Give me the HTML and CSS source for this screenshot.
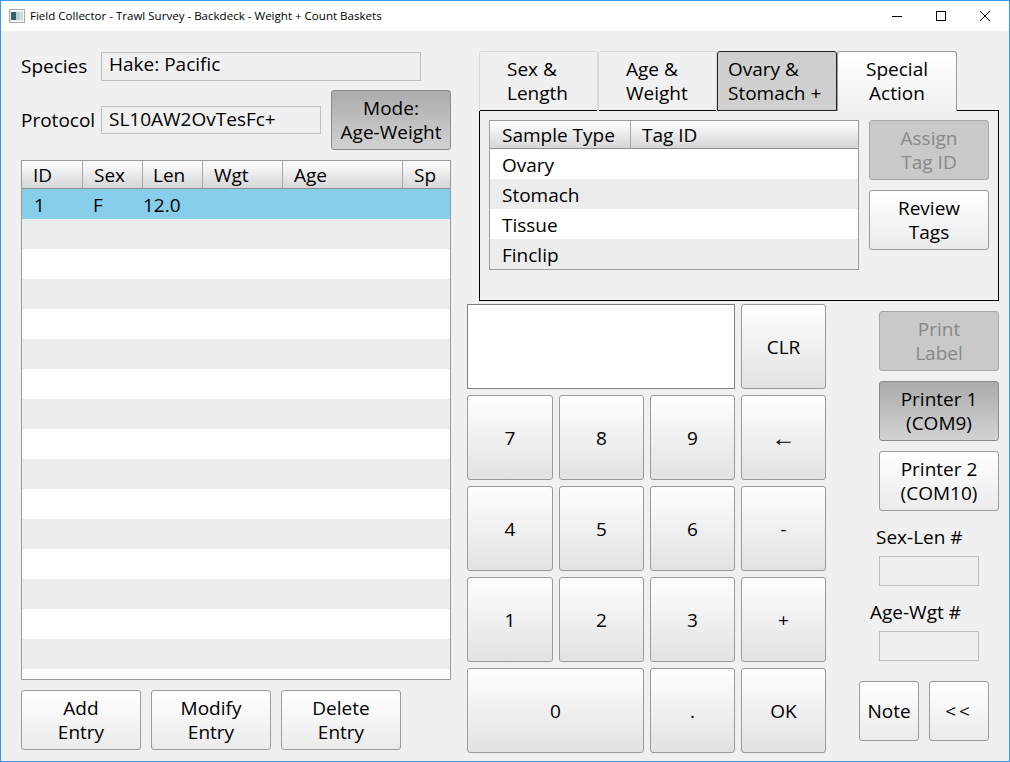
FILE: index.html
```html
<!DOCTYPE html>
<html lang="en">
<head>
<meta charset="utf-8">
<title>Field Collector</title>
<link rel="stylesheet" href="styles.css">
</head>
<body>
<div class="window">
  <header class="titlebar">
    <svg class="appicon" width="16" height="14" viewBox="0 0 16 14"><rect x="0.5" y="0.5" width="15" height="13" fill="#f2f2f2" stroke="#a9a9a9"/><rect x="2" y="3" width="5" height="8" fill="#35606a"/><rect x="7" y="3" width="4" height="8" fill="#b5d3d6"/><rect x="11" y="3" width="3" height="8" fill="#d8d8d8"/></svg>
    <span class="title">Field Collector - Trawl Survey - Backdeck - Weight + Count Baskets</span>
    <div class="winctl">
      <svg width="12" height="12" viewBox="0 0 12 12"><path d="M1 6.5h10" stroke="#000" fill="none"/></svg>
      <svg width="12" height="12" viewBox="0 0 12 12"><rect x="1.5" y="1.5" width="9" height="9" stroke="#000" fill="none"/></svg>
      <svg width="12" height="12" viewBox="0 0 12 12"><path d="M1 1l10 10M11 1L1 11" stroke="#000" fill="none"/></svg>
    </div>
  </header>
  <main class="content">
    <section class="left">
      <div class="row species-row">
        <label class="lbl">Species</label>
        <div class="field species">Hake: Pacific</div>
      </div>
      <div class="row proto-row">
        <label class="lbl">Protocol</label>
        <div class="field protocol">SL10AW2OvTesFc+</div>
        <button class="btn wide active">Mode:<br>Age-Weight</button>
      </div>
      <div class="grid-table entries">
        <div class="thead">
          <div class="th c-id">ID</div><div class="th c-sex">Sex</div><div class="th c-len">Len</div><div class="th c-wgt">Wgt</div><div class="th c-age">Age</div><div class="th c-sp">Sp</div>
        </div>
        <div class="tr sel"><div class="td c-id">1</div><div class="td c-sex">F</div><div class="td c-len num">12.0</div></div>
        <div class="tr alt"></div><div class="tr"></div><div class="tr alt"></div><div class="tr"></div>
        <div class="tr alt"></div><div class="tr"></div><div class="tr alt"></div><div class="tr"></div>
        <div class="tr alt"></div><div class="tr"></div><div class="tr alt"></div><div class="tr"></div>
        <div class="tr alt"></div><div class="tr"></div><div class="tr alt"></div><div class="tr"></div>
        <div class="tr alt"></div><div class="tr"></div>
      </div>
      <div class="row actions">
        <button class="btn wide">Add<br>Entry</button>
        <button class="btn wide">Modify<br>Entry</button>
        <button class="btn wide">Delete<br>Entry</button>
      </div>
    </section>
    <section class="right">
      <div class="tabs">
        <div class="tab plain t1">Sex &amp;<br>Length</div>
        <div class="tab plain t2">Age &amp;<br>Weight</div>
        <div class="tab current t3">Ovary &amp;<br>Stomach +</div>
        <div class="tab bright t4">Special<br>Action</div>
      </div>
      <div class="panel">
        <div class="grid-table samples">
          <div class="thead">
            <div class="th c-type">Sample Type</div><div class="th c-tag">Tag ID</div>
          </div>
          <div class="tr"><div class="td">Ovary</div></div>
          <div class="tr alt"><div class="td">Stomach</div></div>
          <div class="tr"><div class="td">Tissue</div></div>
          <div class="tr alt"><div class="td">Finclip</div></div>
        </div>
        <div class="panel-btns">
          <button class="btn wide disabled">Assign<br>Tag ID</button>
          <button class="btn wide">Review<br>Tags</button>
        </div>
      </div>
      <div class="lower">
        <div class="keypad">
          <div class="display"></div>
          <button class="btn key">CLR</button>
          <button class="btn key">7</button><button class="btn key">8</button><button class="btn key">9</button><button class="btn key arrow">←</button>
          <button class="btn key">4</button><button class="btn key">5</button><button class="btn key">6</button><button class="btn key">-</button>
          <button class="btn key">1</button><button class="btn key">2</button><button class="btn key">3</button><button class="btn key">+</button>
          <button class="btn key zero">0</button><button class="btn key">.</button><button class="btn key">OK</button>
        </div>
        <div class="side">
          <button class="btn wide disabled">Print<br>Label</button>
          <button class="btn wide active">Printer 1<br>(COM9)</button>
          <button class="btn wide">Printer 2<br>(COM10)</button>
          <div class="count-lbl sexlen">Sex-Len #</div>
          <div class="field count"></div>
          <div class="count-lbl agewgt">Age-Wgt #</div>
          <div class="field count"></div>
          <div class="side-end">
            <button class="btn small">Note</button>
            <button class="btn small chev">&lt;&lt;</button>
          </div>
        </div>
      </div>
    </section>
  </main>
</div>
</body>
</html>
```
FILE: styles.css
```css
* { box-sizing: border-box; }
html, body { margin: 0; padding: 0; }
body {
  width: 1010px;
  height: 762px;
  overflow: hidden;
  font-family: "Open Sans", "Noto Sans", sans-serif;
  font-size: 19px;
  line-height: 24px;
  color: #000;
}
.window {
  width: 1010px;
  height: 762px;
  border: 1px solid #3c97ec;
  background: #f0f0f0;
  display: flex;
  flex-direction: column;
}
.titlebar {
  height: 30px;
  flex: none;
  background: #fff;
  display: flex;
  align-items: center;
  padding-left: 8px;
  font-size: 11.55px;
}
.appicon { margin-right: 5px; margin-top: -1px; }
.title { white-space: nowrap; }
.winctl {
  margin-left: auto;
  display: flex;
  gap: 32px;
  padding-right: 18px;
}
.content {
  flex: 1;
  display: flex;
  padding: 20px 0 0 20px;
}
.left { width: 430px; flex: none; }
.right { margin-left: 16px; flex: 1; }
.row { display: flex; }
.lbl { width: 80px; flex: none; }
.species-row { align-items: center; height: 30px; }
.proto-row { align-items: center; height: 60px; margin-top: 9px; }
.field {
  background: #f0f0f0;
  border: 1px solid #bdbdbd;
  padding-left: 7px;
  white-space: nowrap;
}
.species { width: 320px; height: 29px; line-height: 22px; }
.protocol { width: 220px; height: 28px; line-height: 25px; margin-right: 10px; }
.btn {
  font: inherit;
  color: #000;
  padding: 0;
  border: 1px solid #9a9a9a;
  border-radius: 3px;
  background: linear-gradient(#ffffff, #ebebeb);
  text-align: center;
}
.wide { width: 120px; height: 60px; }
.small { width: 60px; height: 60px; }
.chev { letter-spacing: 3px; }
.active {
  background: linear-gradient(#ababab, #d2d2d2);
  border-color: #8c8c8c;
}
.disabled {
  background: #c9c9c9;
  color: #888;
  border-color: #a8a8a8;
}
.grid-table {
  border: 1px solid #9a9a9a;
  background: #fff;
  overflow: hidden;
}
.entries { height: 520px; margin-top: 10px; }
.thead {
  display: flex;
  height: 28px;
  background: linear-gradient(#ffffff, #d6d6d6);
  border-bottom: 1px solid #8f8f8f;
}
.th {
  height: 27px;
  line-height: 28px;
  padding-left: 11px;
  border-right: 1px solid #a8a8a8;
  flex: none;
}
.th:last-child { border-right: 0; }
.tr { display: flex; height: 30px; background: #fff; }
.tr.alt { background: #ececec; }
.tr.sel { background: #87ceeb; }
.td { padding-left: 12px; line-height: 32px; height: 30px; flex: none; }
.c-id { width: 61px; }
.c-sex { width: 60px; }
.td.c-sex { padding-left: 10px; }
.c-len { width: 60px; padding-left: 10px; }
.td.c-len.num { padding-left: 0; }
.c-wgt { width: 80px; }
.c-age { width: 120px; }
.c-sp { width: 48px; }
.c-type { width: 141px; padding-left: 12px; }
.c-tag { flex: 1; }
.actions { gap: 10px; margin-top: 10px; }
.tabs { display: flex; margin-left: 12px; height: 60px; }
.tab {
  width: 119px;
  height: 60px;
  text-align: left;
  padding-left: 27px;
  border: 1px solid #d9d9d9;
  border-bottom: 0;
  border-radius: 3px 3px 0 0;
  padding-top: 5px;
}
.t3, .t4 { width: 120px; }
.t3 { padding-left: 10px; white-space: nowrap; }
.t4 { text-align: center; padding-left: 0; }
.current { background: #cfcfcf; border: 1px solid #222; }
.bright { background: linear-gradient(#fff, #f0f0f0); border-color: #9a9a9a; }
.panel {
  margin-left: 12px;
  width: 520px;
  height: 191px;
  margin-top: -1px;
  border: 1px solid #000;
  padding: 9px;
  display: flex;
  gap: 10px;
}
.samples { width: 370px; height: 150px; }
.panel-btns { display: flex; flex-direction: column; gap: 10px; }
.lower { display: flex; margin-top: 3px; }
.keypad {
  display: grid;
  grid-template-columns: 86px 85px 85px 85px;
  grid-auto-rows: 85px;
  gap: 6px;
  width: 359px;
}
.display {
  grid-column: span 3;
  background: #fff;
  border: 1px solid #808080;
}
.key { border-radius: 3px; background: linear-gradient(#fefefe, #e2e2e2); }
.zero { grid-column: span 2; }
.arrow { font-family: "Liberation Serif", serif; font-size: 24px; }
.side {
  flex: 1;
  padding-top: 7px;
  padding-left: 53px;
  display: flex;
  flex-direction: column;
  gap: 10px;
}
.count-lbl { white-space: nowrap; }
.sexlen { margin: 4px 0 0 -3px; }
.agewgt { margin: 4px 0 0 -9px; }
.count { width: 100px; height: 30px; flex: none; margin-top: -3px; }
.side-end { display: flex; gap: 10px; margin: 10px 0 0 -20px; }
```
